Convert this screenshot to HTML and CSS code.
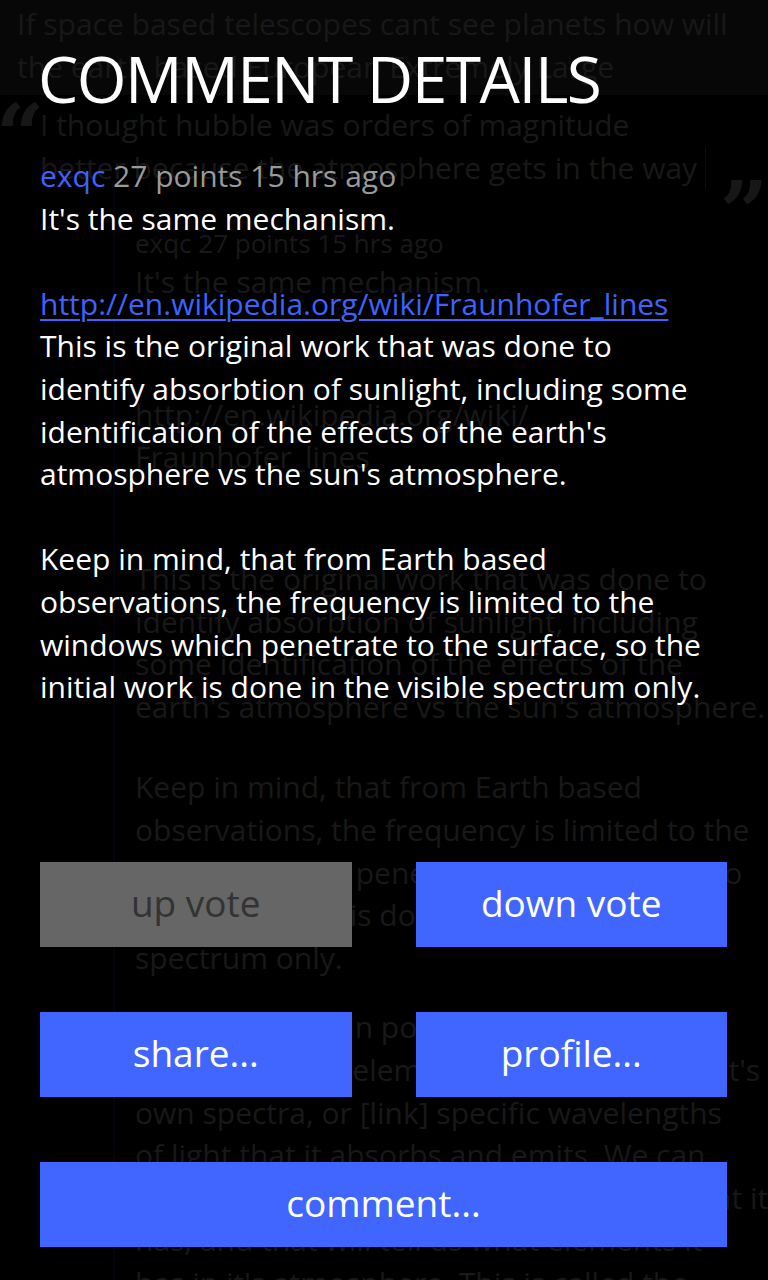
FILE: index.html
```html
<!DOCTYPE html>
<html lang="en">
<head>
<meta charset="utf-8">
<title>Comment details</title>
<link rel="stylesheet" href="styles.css">
</head>
<body>
<div class="page">
  <header class="page-head">
    <div class="line">If space based telescopes cant see planets how will</div>
    <div class="line">the earth based European Extremely Large</div>
  </header>
  <blockquote class="quote">
    <span class="qmark qopen">&ldquo;</span>
    <div class="line">I thought hubble was orders of magnitude</div>
    <div class="line qbox">better because the atmosphere gets in the way</div>
    <span class="qmark qclose">&rdquo;</span>
  </blockquote>
  <section class="thread">
    <div class="bg-meta">exqc 27 points 15 hrs ago</div>
    <div class="line">It's the same mechanism.</div>
    <div class="bg-link">
      <div class="line">http://en.wikipedia.org/wiki/</div>
      <div class="line">Fraunhofer_lines</div>
    </div>
    <div class="para para-first">
      <div class="line">This is the original work that was done to</div>
      <div class="line">identify absorbtion of sunlight, including</div>
      <div class="line">some identification of the effects of the</div>
      <div class="line">earth's atmosphere vs the sun's atmosphere.</div>
    </div>
    <div class="para">
      <div class="line">Keep in mind, that from Earth based</div>
      <div class="line">observations, the frequency is limited to the</div>
      <div class="line">windows which penetrate to the surface, so</div>
      <div class="line">the initial work is done in the visible</div>
      <div class="line">spectrum only.</div>
    </div>
    <div class="para para-late">
      <div class="line">The second main point is that every</div>
      <div class="line">each individual element has a fingerprint, it's</div>
      <div class="line">own spectra, or [link] specific wavelengths</div>
      <div class="line">of light that it absorbs and emits. We can</div>
      <div class="line">look at the light from a planet and see what it</div>
      <div class="line">has, and that will tell us what elements it</div>
      <div class="line">has in it's atmosphere. This is called the</div>
    </div>
  </section>
</div>

<div class="overlay">
  <h1 class="title">COMMENT DETAILS</h1>
  <div class="meta"><span class="author">exqc</span> 27 points 15 hrs ago</div>
  <div class="body">
    <p>It's the same mechanism.</p>
    <p><a class="link" href="#">http://en.wikipedia.org/wiki/Fraunhofer_lines</a><br>This is the original work that was done to identify absorbtion of sunlight, including some identification of the effects of the earth's atmosphere vs the sun's atmosphere.</p>
    <p>Keep in mind, that from Earth based observations, the frequency is limited to the windows which penetrate to the surface, so the initial work is done in the visible spectrum only.</p>
  </div>
  <div class="actions">
    <button class="btn btn-off" type="button">up vote</button>
    <button class="btn" type="button">down vote</button>
    <button class="btn" type="button">share...</button>
    <button class="btn" type="button">profile...</button>
    <button class="btn btn-wide" type="button">comment...</button>
  </div>
</div>
</body>
</html>
```

FILE: styles.css
```css
html, body {
  margin: 0;
  padding: 0;
}

body {
  width: 768px;
  height: 1280px;
  overflow: hidden;
  background: #000;
  position: relative;
  font-family: "Open Sans", "Noto Sans", sans-serif;
  color: #fff;
}

/* ---------- dimmed page underneath ---------- */
.page {
  color: #181818;
  font-size: 30px;
  line-height: 42.6px;
  font-weight: 400;
}

.page-head {
  background: #070707;
  height: 95px;
  padding: 3px 0 0 17px;
  box-sizing: border-box;
  font-size: 30px;
  white-space: nowrap;
}

.quote {
  position: relative;
  margin: 0;
  padding: 9px 0 0 40px;
  white-space: nowrap;
}

.qbox {
  display: inline-block;
  padding-right: 8px;
  border-right: 1px solid #0e0e0e;
}

.qmark {
  position: absolute;
  font-family: "DejaVu Serif", serif;
  font-weight: 700;
  font-size: 84px;
  line-height: 1;
  color: #171717;
}

.qopen {
  left: -4px;
  top: -2px;
}

.qclose {
  right: 0;
  top: 76px;
}

.thread {
  padding-top: 36px;
  white-space: nowrap;
  border-left: 2px solid #04040c;
  margin-left: 113px;
  padding-left: 20px;
}

.bg-meta {
  font-size: 26px;
  line-height: 36px;
}

.bg-link {
  margin-top: 90px;
}

.para {
  margin-top: 38px;
}

.para-first {
  margin-top: 79px;
}

.para-late {
  margin-top: 27px;
}

/* ---------- overlay ---------- */
.overlay {
  position: absolute;
  inset: 0;
  display: flex;
  flex-direction: column;
  padding: 0 41px 33px 40px;
  box-sizing: border-box;
}

.title {
  margin: 39px 0 0 -2px;
  font-size: 64px;
  line-height: 80px;
  font-weight: 400;
  letter-spacing: -1.5px;
  color: #fff;
  white-space: nowrap;
}

.meta {
  margin-top: 36px;
  font-size: 30px;
  line-height: 42.6px;
  color: #9a9a9a;
}

.author {
  color: #3d63ff;
}

.body {
  width: 670px;
  font-size: 30px;
  line-height: 42.6px;
  color: #fff;
}

.body p {
  margin: 0 0 42.6px;
}

.body p:last-child {
  margin-bottom: 0;
}

.link {
  color: #3d63ff;
  text-decoration: underline;
  text-decoration-thickness: 2px;
  text-underline-offset: 4px;
}

.actions {
  margin-top: auto;
  display: grid;
  grid-template-columns: 1fr 1fr;
  column-gap: 64px;
  row-gap: 65px;
}

.btn {
  height: 85px;
  border: 0;
  margin: 0;
  padding: 0 0 4px;
  background: #4066ff;
  color: #fff;
  font-family: "Open Sans", "Noto Sans", sans-serif;
  font-size: 37px;
  font-weight: 400;
  line-height: 1;
}

.btn-off {
  background: #666666;
  color: #333333;
}

.btn-wide {
  grid-column: 1 / -1;
}
```
